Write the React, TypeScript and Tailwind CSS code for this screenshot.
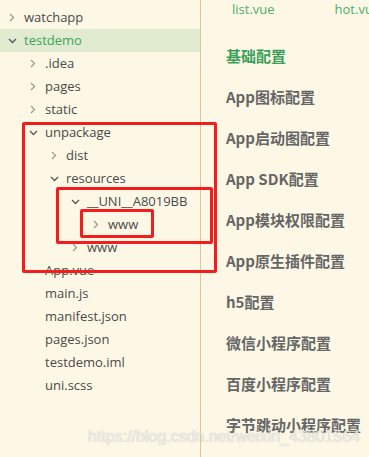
import React from "react";

type Row = { name: string; depth: number; kind: "open" | "closed" | "file"; selected?: boolean };

const rows: Row[] = [
  { name: "watchapp", depth: 0, kind: "closed" },
  { name: "testdemo", depth: 0, kind: "open", selected: true },
  { name: ".idea", depth: 1, kind: "closed" },
  { name: "pages", depth: 1, kind: "closed" },
  { name: "static", depth: 1, kind: "closed" },
  { name: "unpackage", depth: 1, kind: "open" },
  { name: "dist", depth: 2, kind: "closed" },
  { name: "resources", depth: 2, kind: "open" },
  { name: "__UNI__A8019BB", depth: 3, kind: "open" },
  { name: "www", depth: 4, kind: "closed" },
  { name: "www", depth: 3, kind: "closed" },
  { name: "App.vue", depth: 1, kind: "file" },
  { name: "main.js", depth: 1, kind: "file" },
  { name: "manifest.json", depth: 1, kind: "file" },
  { name: "pages.json", depth: 1, kind: "file" },
  { name: "testdemo.iml", depth: 1, kind: "file" },
  { name: "uni.scss", depth: 1, kind: "file" },
];

const items = [
  "App图标配置",
  "App启动图配置",
  "App SDK配置",
  "App模块权限配置",
  "App原生插件配置",
  "h5配置",
  "微信小程序配置",
  "百度小程序配置",
  "字节跳动小程序配置",
];

function Chevron({ open }: { open: boolean }) {
  if (open) {
    return (
      <svg width="9" height="6" viewBox="0 0 9 6" fill="none">
        <path d="M1 1 L4.5 4.5 L8 1" stroke="#555" strokeWidth="1.3" />
      </svg>
    );
  }
  return (
    <svg width="6" height="9" viewBox="0 0 6 9" fill="none">
      <path d="M1 1 L4.5 4.5 L1 8" stroke="#a09a8a" strokeWidth="1.3" />
    </svg>
  );
}

export default function App() {
  return (
    <div
      className="relative w-[369px] h-[457px] overflow-hidden bg-[#fdf8e6] flex"
      style={{ fontFamily: '"Open Sans", "Noto Sans CJK SC", sans-serif' }}
    >
      <div className="w-[201px] shrink-0 border-r border-[#dcc894] pt-[6px]">
        {rows.map((r, i) => (
          <div
            key={i}
            className={`h-[23px] flex items-center text-[13px] ${
              r.selected ? "bg-[#e0ebd0] text-[#3fa35e]" : "text-[#4a4a4a]"
            }`}
            style={{ paddingLeft: r.depth * 21 }}
          >
            <span className="w-[24px] shrink-0 flex justify-center items-center">
              {r.kind !== "file" && <Chevron open={r.kind === "open"} />}
            </span>
            <span className="leading-none">{r.name}</span>
          </div>
        ))}
      </div>
      <div className="flex-1 flex flex-col">
        <div className="h-[20px] flex items-center text-[13px] text-[#4caf6e] whitespace-nowrap">
          <span className="ml-[31px]">list.vue</span>
          <span className="ml-[60px]">hot.vue</span>
        </div>
        <div
          className="flex flex-col pl-[25px] pt-[16px]"
          style={{ fontFamily: '"Noto Sans CJK SC", sans-serif' }}
        >
          <div className="h-[41px] flex items-center text-[15px] font-bold text-[#3c9f5a]">基础配置</div>
          {items.map((t) => (
            <div key={t} className="h-[41px] flex items-center text-[15px] font-bold text-[#666666] whitespace-nowrap">
              {t}
            </div>
          ))}
        </div>
      </div>

      <div className="absolute left-[22px] top-[122px] w-[195px] h-[151px] border-[3px] border-[#f21d1d] rounded-[2px]" />
      <div className="absolute left-[56px] top-[187px] w-[157px] h-[57px] border-[3px] border-[#f21d1d] rounded-[2px]" />
      <div className="absolute left-[80px] top-[209px] w-[74px] h-[29px] border-[3px] border-[#f21d1d] rounded-[2px]" />

      <div
        className="absolute left-[88px] top-[429px] text-[16px] leading-none text-white/80 whitespace-nowrap [text-shadow:0_0_1px_rgba(0,0,0,0.35)]"
        style={{ fontFamily: '"Liberation Sans", Arial, sans-serif' }}
      >
        https://blog.csdn.net/weixin_43801564
      </div>
    </div>
  );
}
